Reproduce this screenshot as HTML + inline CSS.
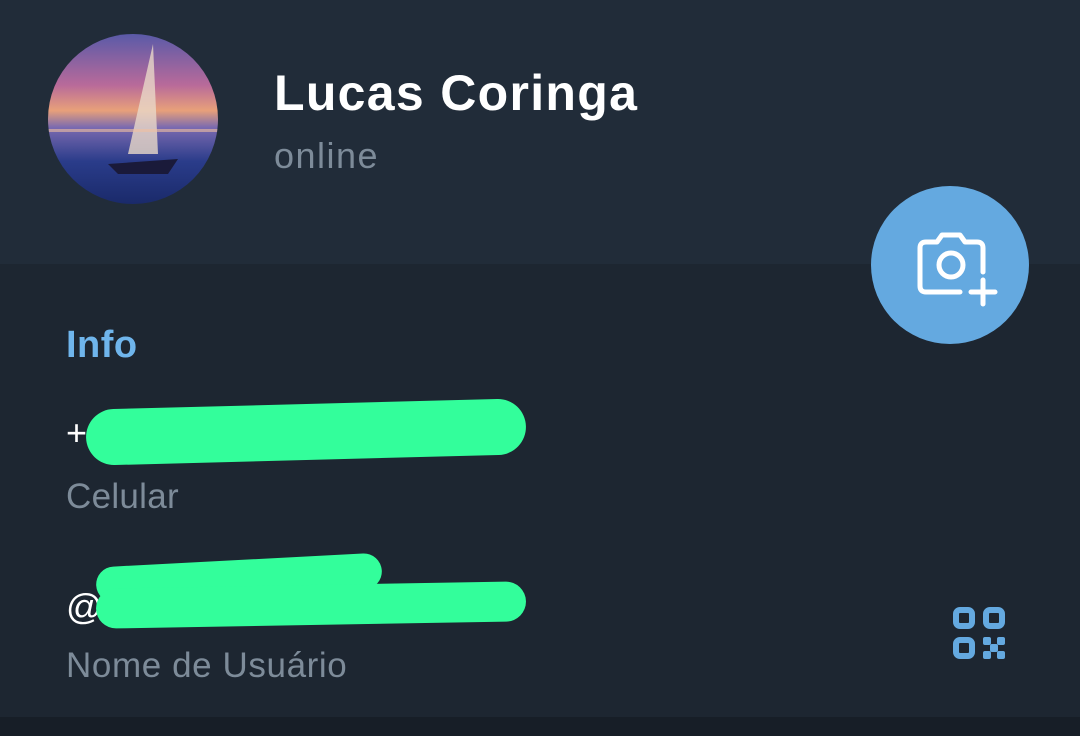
<!DOCTYPE html>
<html><head><style>
body{margin:0;width:1080px;height:736px;overflow:hidden;background:#1d2631;font-family:"Liberation Sans",sans-serif;position:relative}
.hdr{position:absolute;left:0;top:0;width:1080px;height:264px;background:#212c39}
.bot{position:absolute;left:0;top:717px;width:1080px;height:19px;background:#171e27}
.av{position:absolute;left:48px;top:34px;width:170px;height:170px;border-radius:50%;overflow:hidden;background:linear-gradient(180deg,#5a5aa8 0%,#b86a9a 30%,#e8a07a 45%,#7a6ab0 55%,#2a3c8a 75%,#1a2a6a 100%)}
.t{position:absolute;white-space:nowrap}
.fab{position:absolute;left:871px;top:186px;width:158px;height:158px;border-radius:50%;background:#64a9e0}
.scr{position:absolute;background:#33fe9b;border-radius:30px}
</style></head><body>
<div class="hdr"></div>
<div class="bot"></div>
<div class="av">
<svg width="170" height="170"><path d="M105 10 L80 120 L110 120 Z" fill="#e8d8c8" opacity=".8"/><path d="M60 130 L130 125 L120 140 L70 140Z" fill="#1a1a3a"/><rect x="0" y="95" width="170" height="3" fill="#f0c0a0" opacity=".6"/></svg>
</div>
<div class="t" style="left:274px;top:64px;font-size:50px;font-weight:bold;color:#fff;letter-spacing:1.3px">Lucas Coringa</div>
<div class="t" style="left:274px;top:135px;font-size:36px;color:#7d8b99;letter-spacing:1.5px">online</div>
<div class="fab"></div>
<svg style="position:absolute;left:871px;top:186px" width="158" height="158" viewBox="871 186 158 158" fill="none" stroke="#fff" stroke-width="5" stroke-linecap="round" stroke-linejoin="round">
<path d="M960 292 H926 Q920 292 920 286 V248 Q920 242 926 242 H937 L942 235 H960 L965 242 H977 Q983 242 983 248 V272"/>
<circle cx="951" cy="265" r="12"/>
<path d="M983 280 V304 M971 292 H995"/>
</svg>
<div class="t" style="left:66px;top:324px;font-size:38px;font-weight:bold;color:#6fb5ec;letter-spacing:.5px">Info</div>
<div class="t" style="left:66px;top:412px;font-size:36px;color:#fff">+</div>
<div class="scr" style="left:86px;top:404px;width:440px;height:56px;transform:rotate(-1.5deg)"></div>
<div class="t" style="left:66px;top:477px;font-size:35px;color:#7d8b99;letter-spacing:.3px">Celular</div>
<div class="t" style="left:66px;top:586px;font-size:36px;color:#fff">@</div>
<div class="scr" style="left:96px;top:560px;width:286px;height:36px;transform:rotate(-3deg)"></div>
<div class="scr" style="left:96px;top:585px;width:430px;height:40px;transform:rotate(-1deg)"></div>
<div class="t" style="left:66px;top:646px;font-size:35px;color:#7d8b99;letter-spacing:.6px">Nome de Usuário</div>
<svg style="position:absolute;left:950px;top:604px" width="60" height="60" fill="none" stroke="#64a9e0" stroke-width="6">
<rect x="6" y="6" width="16" height="16" rx="4"/><rect x="36" y="6" width="16" height="16" rx="4"/><rect x="6" y="36" width="16" height="16" rx="4"/>
<g fill="#64a9e0" stroke="none"><rect x="33" y="33" width="8" height="8" rx="2"/><rect x="47" y="33" width="8" height="8" rx="2"/><rect x="40" y="40" width="8" height="8" rx="2"/><rect x="33" y="47" width="8" height="8" rx="2"/><rect x="47" y="47" width="8" height="8" rx="2"/></g>
</svg>
</body></html>
